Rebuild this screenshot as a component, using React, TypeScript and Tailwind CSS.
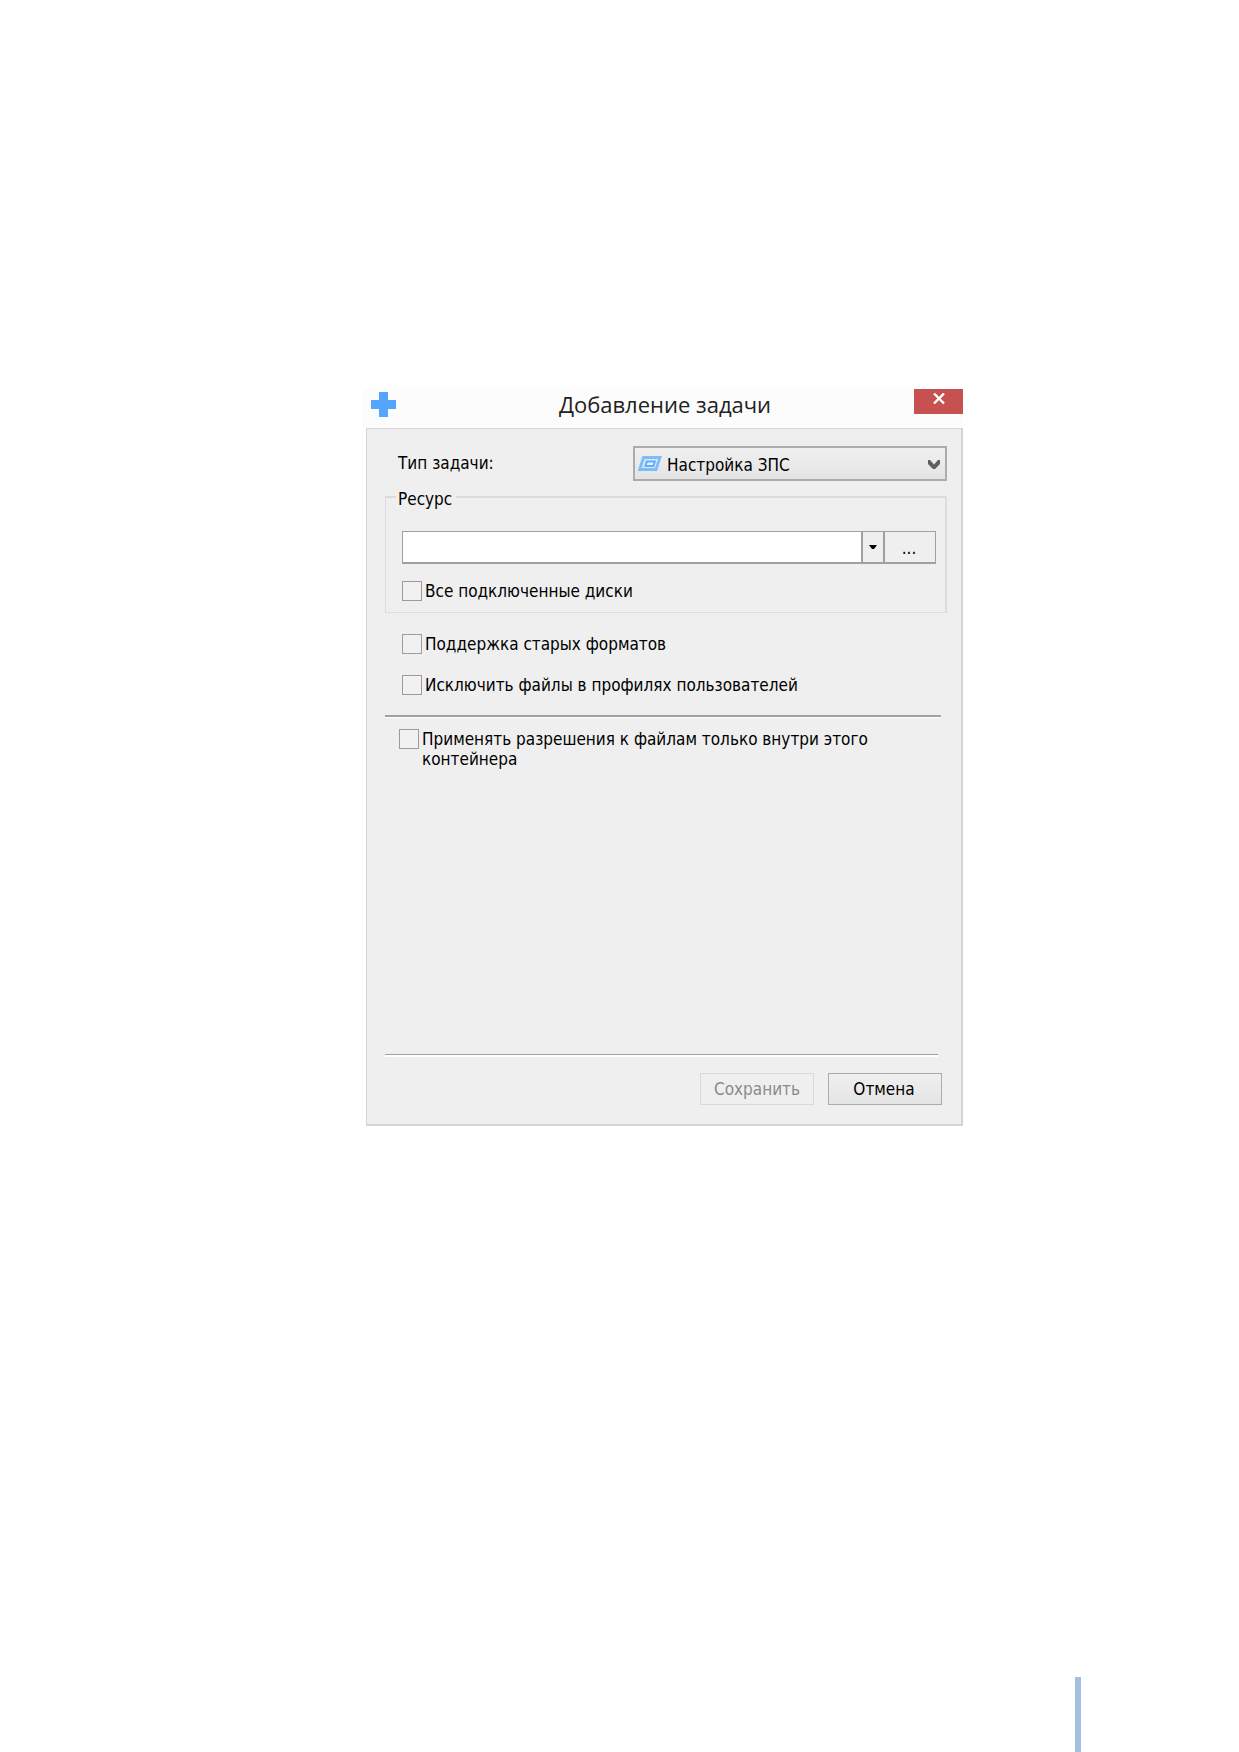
import type { ReactNode } from "react";

function CheckRow({ id, children }: { id: string; children: ReactNode }) {
  return (
    <div className="flex items-start gap-[3px]">
      <input
        id={id}
        type="checkbox"
        className="size-5 shrink-0 appearance-none border border-[#9c9c9c] bg-[#f1f1f1] checked:bg-[#54a5fb]"
      />
      <label htmlFor={id} className="pb-px leading-5">
        {children}
      </label>
    </div>
  );
}

function TitleBar() {
  return (
    <header className="flex h-[39px] items-start bg-[#fcfcfc]">
      <div className="w-[49px] pt-[3px] pl-2">
        <svg viewBox="0 0 25 25" className="size-[25px]" aria-hidden="true">
          <path d="M8 0h9v8h8v9h-8v8H8v-8H0V8h8z" fill="#54a5fb" />
        </svg>
      </div>
      <h1 className="flex-1 pl-1 text-center font-['Open_Sans','Noto_Sans',sans-serif] text-[22px] leading-[30px] text-[#222]">
        Добавление задачи
      </h1>
      <button
        type="button"
        aria-label="Закрыть"
        className="flex h-[25px] w-[49px] justify-center bg-[#c75050] pt-1"
      >
        <svg viewBox="0 0 12 12" className="size-3" aria-hidden="true">
          <path d="M1 0.500l10 10M11 0.500l-10 10" stroke="#fff" strokeWidth="2.4" fill="none" />
        </svg>
      </button>
    </header>
  );
}

function TaskType() {
  return (
    <div className="flex items-center">
      <label htmlFor="task-type" className="w-[248px] pl-[13px]">
        Тип задачи:
      </label>
      <div className="relative flex-1">
        <select
          id="task-type"
          className="block h-[35px] w-full appearance-none border-2 border-[#acacac] bg-linear-to-b from-[#f0f0f0] to-[#e4e4e4] pt-1 pl-8"
        >
          <option>Настройка ЗПС</option>
        </select>
        <svg
          viewBox="0 0 24 15"
          className="pointer-events-none absolute top-[10px] left-[5px] h-[15px] w-6"
          fill="none"
          aria-hidden="true"
        >
          <path d="M5.500 1.500h16.500l-4 12H1.700z" fill="#d6e8fa" stroke="#7dbcf8" strokeWidth="2.800" />
          <path d="M8.800 5.500h8l-1.300 4.500h-8z" fill="#e4f0fb" stroke="#62adf8" strokeWidth="2" />
        </svg>
        <svg
          viewBox="0 0 12 11"
          className="pointer-events-none absolute top-[13px] right-[7px] h-[11px] w-3"
          aria-hidden="true"
        >
          <path d="M0 1h2l4 4.500L10 1h2v4L7 10H5L0 5z" fill="#606060" />
        </svg>
      </div>
    </div>
  );
}

function Resource() {
  return (
    <fieldset className="mt-1 border border-t-2 border-r-2 border-[#dcdcdc] pr-[9px] pb-2.5 pl-4">
      <legend className="-ml-1.5 pt-1 pr-1 pl-0.5 leading-5">Ресурс</legend>
      <div className="mt-[22px] flex h-[33px]">
        <input
          type="text"
          aria-label="Ресурс"
          className="min-w-0 flex-1 border border-r-2 border-b-2 border-[#a0a0a0] bg-white px-2"
        />
        <button
          type="button"
          aria-label="Список"
          className="flex w-5 items-center justify-center border-t border-b-2 border-[#a0a0a0]"
        >
          <svg viewBox="0 0 8 4" className="h-1 w-2" aria-hidden="true">
            <path d="M0 0h8L5 4H3z" fill="#000" />
          </svg>
        </button>
        <button
          type="button"
          className="w-[53px] border border-b-2 border-l-2 border-[#a0a0a0] pt-0.5 pr-0.5 leading-7"
        >
          ...
        </button>
      </div>
      <div className="mt-[17px]">
        <CheckRow id="all-disks">Все подключенные диски</CheckRow>
      </div>
    </fieldset>
  );
}

export default function App() {
  return (
    <div className="flex min-h-screen flex-col bg-white pt-[389px] font-['DejaVu_Sans_Condensed','DejaVu_Sans',sans-serif] text-[17px] text-black">
      <main className="pr-[276px] pl-[363px]">
        <TitleBar />
        <form className="ml-[3px] flex min-h-[698px] flex-col border border-r-2 border-b-2 border-[#d5d5d5] bg-[#efefef] pt-[17px] pr-3.5 pb-[19px] pl-[18px]">
          <TaskType />
          <Resource />
          <div className="mt-[21px] flex flex-col gap-5 pl-[17px]">
            <CheckRow id="old-formats">Поддержка старых форматов</CheckRow>
            <CheckRow id="skip-profiles">Исключить файлы в профилях пользователей</CheckRow>
          </div>
          <hr className="mt-[19px] mr-1.5 h-[3px] border-t-2 border-b border-t-[#a0a0a0] border-b-white" />
          <div className="mt-[11px] pr-12 pl-3.5">
            <CheckRow id="only-container">
              Применять разрешения к файлам только внутри этого контейнера
            </CheckRow>
          </div>
          <hr className="mt-auto mr-[9px] h-[3px] border-t border-b-2 border-t-[#a0a0a0] border-b-white" />
          <div className="mt-4 mr-[5px] flex justify-end gap-3.5">
            <button
              type="button"
              disabled
              className="h-8 w-[114px] border border-[#d9d9d9] bg-[#efefef] pt-0.5 text-[#8a8a8a]"
            >
              Сохранить
            </button>
            <button
              type="button"
              className="h-8 w-[114px] border border-[#acacac] bg-linear-to-b from-[#f0f0f0] to-[#e4e4e4] pt-0.5 pr-0.5"
            >
              Отмена
            </button>
          </div>
        </form>
      </main>
      <div className="mt-auto mr-[158px] h-[75px] w-1.5 self-end bg-[#a7bfde]" />
    </div>
  );
}
